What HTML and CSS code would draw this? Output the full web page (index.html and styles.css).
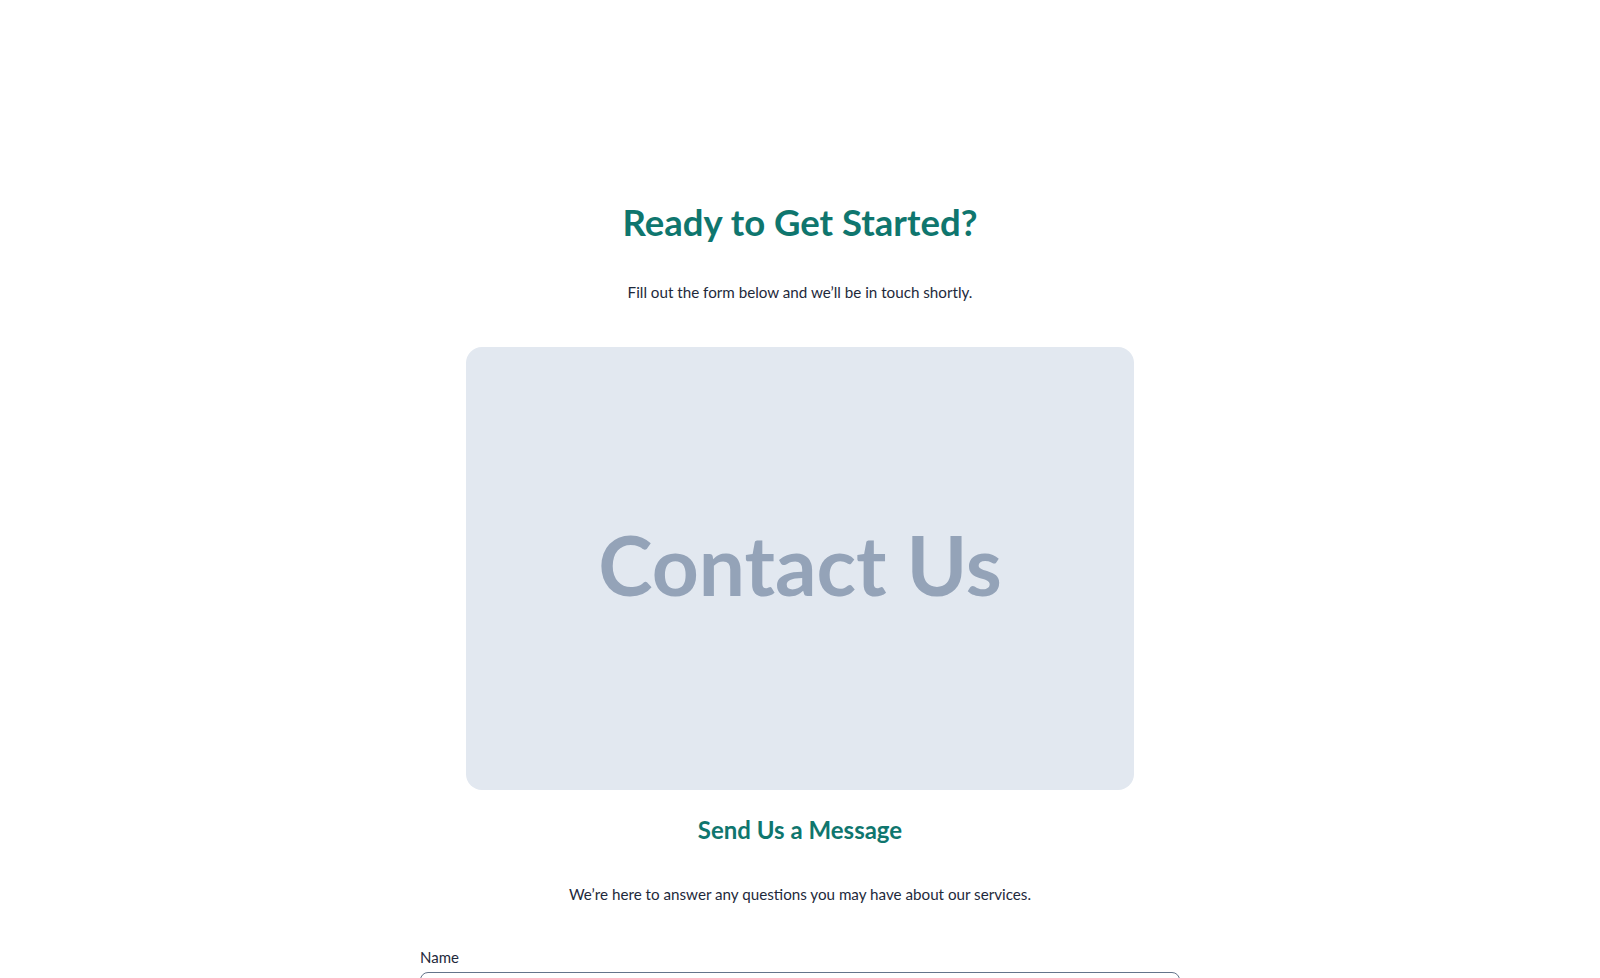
FILE: index.html
```html
<!DOCTYPE html>
<html lang="en">
<head>
<meta charset="utf-8">
<title>Contact</title>
<link rel="stylesheet" href="styles.css">
</head>
<body>
<main class="page">
  <section class="intro">
    <h1 class="title">Ready to Get Started?</h1>
    <p class="lead">Fill out the form below and we’ll be in touch shortly.</p>
  </section>
  <div class="hero-card">
    <span class="hero-text">Contact Us</span>
  </div>
  <section class="message">
    <h2 class="subtitle">Send Us a Message</h2>
    <p class="lead">We’re here to answer any questions you may have about our services.</p>
  </section>
  <form class="form">
    <label class="field">
      <span class="label">Name</span>
      <input class="input" type="text">
    </label>
  </form>
</main>
</body>
</html>
```

FILE: styles.css
```css
* { box-sizing: border-box; }
html, body { margin: 0; padding: 0; background: #ffffff; }
body {
  font-family: "Lato", "Noto Sans", sans-serif;
  color: #1e293b;
}
.page {
  display: flex;
  flex-direction: column;
  align-items: center;
  padding-top: 200px;
}
.intro, .message { text-align: center; }
.title {
  margin: 0;
  font-size: 36.5px;
  line-height: 44px;
  font-weight: 700;
  color: #0f766e;
}
.lead {
  margin: 0;
  font-size: 15.2px;
  line-height: 24px;
}
.intro .lead { margin-top: 36px; }
.hero-card {
  margin-top: 43px;
  width: 668px;
  height: 443px;
  border-radius: 16px;
  background: #e2e8f0;
  display: flex;
  align-items: center;
  justify-content: center;
}
.hero-text {
  font-family: "Lato", sans-serif;
  font-weight: 700;
  font-size: 82px;
  line-height: 1;
  padding-bottom: 9px;
  color: #94a3b8;
}
.message { margin-top: 24px; }
.subtitle {
  margin: 0;
  font-size: 24px;
  line-height: 32px;
  font-weight: 700;
  color: #0f766e;
}
.message .lead { margin-top: 36px; }
.form {
  margin-top: 41px;
  width: 760px;
}
.field { display: flex; flex-direction: column; gap: 4px; }
.label { font-size: 15px; line-height: 21px; }
.input {
  height: 44px;
  border: 1px solid #64748b;
  border-radius: 8px;
  font: inherit;
}
```
